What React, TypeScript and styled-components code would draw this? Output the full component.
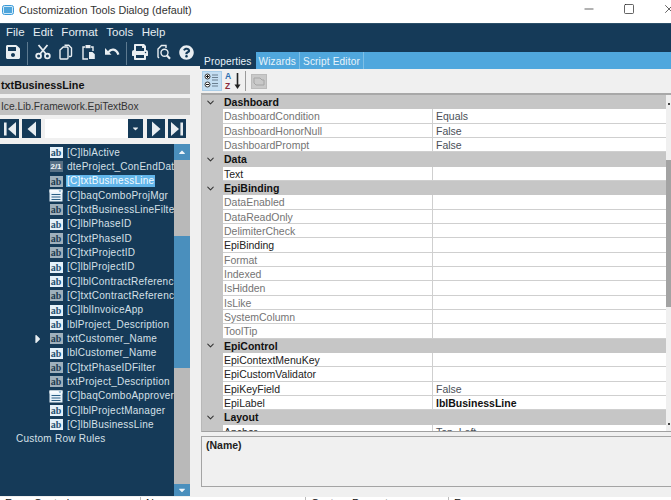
import React from "react";
import styled, { createGlobalStyle } from "styled-components";
import { FaSave, FaQuestionCircle, FaPrint, FaCaretRight, FaCaretUp, FaCaretDown } from "react-icons/fa";
import { ChevronDown, Minus, Square, X } from "lucide-react";

const NAVY = "#153a58";
const BLUE = "#50a7dd";
const SCROLLBLUE = "#4a8fbd";
const GREY = "#c6c6c6";
const PANEL = "#f0f0f0";

const Global = createGlobalStyle`
  html, body { margin: 0; padding: 0; background: ${PANEL}; }
  body { font-family: "Noto Sans", "Liberation Sans", sans-serif; }
  * { box-sizing: border-box; }
`;

const Window = styled.div`
  width: 671px;
  height: 500px;
  overflow: hidden;
  display: flex;
  flex-direction: column;
  background: ${PANEL};
`;

const TitleBar = styled.div`
  height: 23px;
  flex: none;
  background: #fff;
  display: flex;
  align-items: center;
  padding: 0 0 3px 2px;
  color: #333;
  font-family: "Liberation Sans", sans-serif;
  font-size: 10.8px;
`;
const TitleText = styled.span`
  margin-left: 5px;
`;
const WinControls = styled.div`
  margin-left: auto;
  margin-right: -5px;
  margin-bottom: 2px;
  display: flex;
  align-items: center;
  gap: 27px;
  color: #222;
  svg { display: block; flex: none; }
`;

const MenuBar = styled.div`
  height: 17px;
  flex: none;
  background: ${NAVY};
  display: flex;
  align-items: center;
  gap: 8.5px;
  padding-left: 6px;
  color: #e6edf2;
  font-family: "Liberation Sans", sans-serif;
  font-size: 11.5px;
  border-top: 1px solid #2c5069;
`;

const Main = styled.div`
  flex: 1;
  min-height: 0;
  display: flex;
`;
const LeftCol = styled.div`
  width: 200px;
  flex: none;
  display: flex;
  flex-direction: column;
`;
const RightCol = styled.div`
  flex: 1;
  min-width: 0;
  display: flex;
  flex-direction: column;
`;

const Toolbar = styled.div`
  height: 26px;
  flex: none;
  background: ${NAVY};
  display: flex;
  align-items: flex-start;
  padding: 3px 0 0 1.5px;
  color: #e9eef2;
`;
const ToolSlot = styled.div`
  width: 23px;
  height: 18px;
  display: flex;
  align-items: center;
  justify-content: center;
  flex: none;
`;
const ToolSep = styled.div<{ $after: number }>`
  width: 1px;
  height: 23px;
  margin: -1px ${(p) => p.$after}px 0 2.5px;
  background: #5d7a90;
  flex: none;
`;

const LeftBody = styled.div`
  flex: 1;
  min-height: 0;
  display: flex;
  flex-direction: column;
  padding: 9px 10.5px 0 0;
`;
const NameBox = styled.div<{ $bold?: boolean }>`
  height: ${(p) => (p.$bold ? 19 : 17)}px;
  margin-bottom: 4px;
  flex: none;
  background: #c1c1c1;
  display: flex;
  align-items: center;
  padding-left: 1px;
  color: ${(p) => (p.$bold ? "#111" : "#333")};
  font-family: "Liberation Sans", sans-serif;
  font-size: ${(p) => (p.$bold ? 10.8 : 10.2)}px;
  font-weight: ${(p) => (p.$bold ? 700 : 400)};
  white-space: nowrap;
  overflow: hidden;
`;
const NavRow = styled.div`
  height: 19px;
  flex: none;
  display: flex;
  gap: 3px;
  color: #e8edf1;
`;
const NavBtn = styled.div<{ $w?: number }>`
  width: ${(p) => p.$w ?? 19}px;
  flex: none;
  background: ${NAVY};
  display: flex;
  align-items: center;
  justify-content: center;
`;
const NavField = styled.div`
  width: 83px;
  margin-left: 1px;
  flex: none;
  background: #fff;
`;
const NavDrop = styled(NavBtn)`
  margin: 0 1px 0 -3px;
`;

const TreePanel = styled.div`
  height: 352px;
  margin-top: 6px;
  flex: none;
  display: flex;
  background: ${NAVY};
`;
const TreeList = styled.div`
  flex: 1;
  min-width: 0;
  overflow: hidden;
  padding-top: 1.5px;
  color: #d5e0e8;
  font-family: "Liberation Sans", sans-serif;
  font-size: 10px;
  letter-spacing: 0.25px;
`;
const TreeRow = styled.div`
  height: 14.33px;
  display: flex;
  align-items: center;
  white-space: nowrap;
`;
const Marker = styled.div`
  width: 49px;
  flex: none;
  display: flex;
  justify-content: flex-end;
  padding-right: 4px;
  color: #e8eef2;
  svg { display: block; }
`;
const IconBox = styled.div`
  width: 14px;
  flex: none;
  margin-right: 3px;
  display: flex;
  justify-content: center;
`;
const TreeLabel = styled.span<{ $sel?: boolean }>`
  padding: 0 1px;
  line-height: 12px;
  background: ${(p) => (p.$sel ? "#62b5ea" : "transparent")};
  color: ${(p) => (p.$sel ? "#f4fbff" : "inherit")};
`;
const RootLabel = styled.div`
  height: 14.33px;
  margin-top: -1px;
  padding-left: 16px;
  display: flex;
  align-items: center;
`;
const Glyph = styled.span<{ $kind: "label" | "text" | "date" }>`
  display: block;
  width: 13px;
  height: 11px;
  line-height: 11px;
  text-align: center;
  font-family: ${(p) => (p.$kind === "date" ? '"Liberation Sans"' : '"Liberation Serif"')}, serif;
  font-size: ${(p) => (p.$kind === "date" ? 8 : 10)}px;
  font-weight: 700;
  letter-spacing: 0;
  background: ${(p) => (p.$kind === "label" ? "#e4f1fa" : p.$kind === "text" ? "#9fb0bc" : "#587186")};
  color: ${(p) => (p.$kind === "label" ? "#24506f" : p.$kind === "text" ? "#1c3a50" : "#f0f4f7")};
`;

const TreeScroll = styled.div`
  width: 15.5px;
  flex: none;
  display: flex;
  flex-direction: column;
  color: #eef5fa;
`;
const ScrollBtn = styled.div<{ $h: number }>`
  height: ${(p) => p.$h}px;
  flex: none;
  background: ${SCROLLBLUE};
  display: flex;
  align-items: center;
  justify-content: center;
`;
const ScrollPart = styled.div<{ $h: number; $c: string }>`
  height: ${(p) => p.$h}px;
  flex: none;
  background: ${(p) => p.$c};
`;

const TopSpacer = styled.div`
  height: 12px;
  flex: none;
  background: ${NAVY};
`;
const TabStrip = styled.div`
  height: 17px;
  flex: none;
  background: ${BLUE};
  display: flex;
  font-family: "Liberation Sans", sans-serif;
  font-size: 10.1px;
  letter-spacing: 0.15px;
  color: #e8f4fb;
`;
const NavyGap = styled.div`
  width: 1px;
  flex: none;
  background: ${NAVY};
`;
const Tab = styled.div<{ $active?: boolean }>`
  display: flex;
  align-items: center;
  padding: 1px 3px 0 3px;
  background: ${(p) => (p.$active ? NAVY : "transparent")};
  border-right: 1px solid ${(p) => (p.$active ? NAVY : "#7fbfe6")};
`;
const PropTools = styled.div`
  height: 24px;
  flex: none;
  display: flex;
  align-items: center;
  padding-left: 2px;
`;
const ActiveTool = styled.div`
  width: 20px;
  height: 20px;
  flex: none;
  background: #c4def2;
  border: 1px solid #a9cde8;
  display: flex;
  align-items: center;
  justify-content: center;
`;
const SortTool = styled.div`
  width: 20px;
  height: 20px;
  flex: none;
  margin-left: 2px;
`;
const PropSep = styled.div`
  width: 1px;
  height: 20px;
  margin: 0 5px 0 1px;
  background: #9a9a9a;
`;

const Grid = styled.div`
  height: 339px;
  flex: none;
  overflow: hidden;
  margin-left: 1px;
  display: flex;
  border-top: 2px solid #a8a8a8;
  border-bottom: 1px solid #a0a0a0;
  border-left: 1px solid #b8b8b8;
`;
const GridBody = styled.div`
  flex: 1;
  min-width: 0;
  background: #fff;
  font-family: "Liberation Sans", sans-serif;
  font-size: 10.5px;
`;
const CatRow = styled.div`
  height: 14.33px;
  display: flex;
  align-items: center;
  background: ${GREY};
  color: #111;
  font-weight: 700;
  svg { display: block; }
`;
const CatChevron = styled.div`
  width: 16px;
  margin-right: 6px;
  flex: none;
  display: flex;
  justify-content: center;
  color: #333;
`;
const PropRow = styled.div`
  height: 14.33px;
  display: flex;
  white-space: nowrap;
`;
const RowMargin = styled.div`
  width: 21px;
  flex: none;
  background: ${GREY};
`;
const NameCell = styled.div<{ $on?: boolean }>`
  width: 210px;
  flex: none;
  padding-left: 1px;
  line-height: 14.5px;
  color: ${(p) => (p.$on ? "#222" : "#747474")};
  border-bottom: 1px solid #cfcfcf;
  border-right: 1px solid #cfcfcf;
`;
const ValueCell = styled.div<{ $strong?: boolean }>`
  flex: 1;
  min-width: 0;
  padding-left: 3px;
  line-height: 14.5px;
  color: ${(p) => (p.$strong ? "#111" : "#4a4f58")};
  font-weight: ${(p) => (p.$strong ? 700 : 400)};
  border-bottom: 1px solid #cfcfcf;
`;
const GridScroll = styled.div`
  width: 5px;
  flex: none;
  display: flex;
  flex-direction: column;
  background: ${PANEL};
`;
const ScrollDot = styled.div<{ $end?: boolean }>`
  width: 2px;
  height: 2px;
  flex: none;
  margin: ${(p) => (p.$end ? "auto 0 6px 2px" : "8px 0 0 2px")};
  background: #444;
`;
const GridThumb = styled.div`
  height: 147px;
  margin-top: 55px;
  flex: none;
  background: #a3a3a3;
`;

const HelpBox = styled.div`
  height: 51px;
  margin: 4px 0 0 1px;
  flex: none;
  border: 1px solid #a4a4a4;
  border-right: none;
  background: ${PANEL};
  padding: 2px 4px;
  font-family: "Liberation Sans", sans-serif;
  font-size: 10.5px;
  font-weight: 700;
  color: #222;
`;

const BottomStrip = styled.div`
  height: 3px;
  flex: none;
  background: #fff;
  display: flex;
  overflow: hidden;
  font-family: "Liberation Sans", sans-serif;
  font-size: 11px;
  line-height: 11px;
  color: #111;
`;
const StripCell = styled.div<{ $w: number; $line?: boolean }>`
  width: ${(p) => p.$w}px;
  flex: none;
  padding: 1px 0 0 5px;
  white-space: nowrap;
  border-left: ${(p) => (p.$line ? "1px solid #bbb" : "none")};
`;

function Combo() {
  return (
    <svg width="14" height="13" viewBox="0 0 14 13">
      <rect x="0.5" y="0.5" width="13" height="12" fill="#e6f1f9" />
      <rect x="0.5" y="0.5" width="13" height="3" fill="#f7fbfe" />
      <path d="M9.5 1.5h3l-1.5 1.6z" fill="#4a8fbd" />
      <path d="M2.5 5.5h9M2.5 8h9M2.5 10.5h9" stroke="#2b5f85" strokeWidth="1.2" />
    </svg>
  );
}

function CategorizedIcon() {
  return (
    <svg width="16" height="16" viewBox="0 0 16 16" fill="none">
      <circle cx="3.5" cy="3.5" r="2.5" fill="#fff" stroke="#333" />
      <circle cx="3.5" cy="11.5" r="2.5" fill="#fff" stroke="#333" />
      <path d="M2 3.5h3M3.5 2v3M2 11.5h3" stroke="#111" />
      <path d="M8 2h6M8 4.5h6M8 7h6M8 10.5h6M8 13h6" stroke="#6a7f90" />
    </svg>
  );
}

function SortIcon() {
  return (
    <svg width="20" height="20" viewBox="0 0 20 20">
      <text x="1" y="7.8" fontFamily="Liberation Sans" fontWeight="700" fontSize="8.5" fill="#2a6fb0">A</text>
      <text x="1" y="17.5" fontFamily="Liberation Sans" fontWeight="700" fontSize="8.5" fill="#8a2a3a">Z</text>
      <path d="M13.5 2v13" stroke="#222" strokeWidth="1.6" />
      <path d="M10.5 13.5h6l-3 4.5z" fill="#222" />
    </svg>
  );
}

function PagesIcon() {
  return (
    <svg width="16" height="15" viewBox="0 0 16 15">
      <rect x="0.5" y="0.5" width="15" height="14" fill="#c9c9c9" stroke="#bbb" />
      <path d="M3 4h6l2 2h2v5H5L3 9z" fill="none" stroke="#a5a5a5" />
    </svg>
  );
}

function CutIcon() {
  return (
    <svg width="16" height="16" viewBox="0 0 16 16" fill="none" stroke="currentColor" strokeWidth="1.8">
      <circle cx="3.6" cy="12" r="2.4" />
      <circle cx="12.4" cy="12" r="2.4" />
      <path d="M5 10 12.5 1M11 10 3.5 1" />
    </svg>
  );
}

function CopyIcon() {
  return (
    <svg width="15" height="16" viewBox="0 0 15 16" fill="none" stroke="currentColor" strokeWidth="1.4">
      <path d="M6.5 1.2h4.2l2.8 2.8v7.5a1 1 0 0 1-1 1H11" />
      <path d="M2 6l3.2-3h3.8a1 1 0 0 1 1 1v10a1 1 0 0 1-1 1H3a1 1 0 0 1-1-1z" />
    </svg>
  );
}

function PasteIcon() {
  return (
    <svg width="15" height="16" viewBox="0 0 15 16" fill="none" stroke="currentColor" strokeWidth="1.4">
      <path d="M4 3H2v12h5" />
      <path d="M10 3h2v4" />
      <rect x="4.5" y="1" width="5" height="3.2" fill="currentColor" stroke="none" />
      <path d="M8 8h3.5l2.3 2.3V15H8z" fill="currentColor" stroke="none" />
    </svg>
  );
}

function UndoIcon() {
  return (
    <svg width="16" height="14" viewBox="0 0 16 14" fill="none">
      <path d="M4.5 7.2C7 3.6 12 3.4 14.4 9.6" stroke="currentColor" strokeWidth="2.3" />
      <path d="M1 3v6.8h6.5z" fill="currentColor" />
    </svg>
  );
}

function FindIcon() {
  return (
    <svg width="15" height="16" viewBox="0 0 15 16" fill="none" stroke="currentColor" strokeWidth="1.4">
      <path d="M3 14 2 13V5l3.5-3.5H10V4" />
      <circle cx="8.5" cy="8.8" r="3.5" />
      <path d="M11 11.5l3 3.3" strokeWidth="2.2" />
    </svg>
  );
}

function NavIcon({ dir, end }: { dir: "left" | "right"; end?: boolean }) {
  const flip = dir === "right" ? "matrix(-1 0 0 1 16 0)" : undefined;
  return (
    <svg width="16" height="16" viewBox="0 0 16 16" fill="currentColor">
      <g transform={flip}>
        {end ? (
          <>
            <rect x="2" y="1.5" width="2.6" height="13" />
            <path d="M14 1v14L6 8z" />
          </>
        ) : (
          <path d="M12 0.5v15L3.5 8z" />
        )}
      </g>
    </svg>
  );
}

type Kind = "label" | "text" | "date" | "combo";
const items: [Kind, string][] = [
  ["label", "[C]lblActive"],
  ["date", "dteProject_ConEndDate"],
  ["text", "[C]txtBusinessLine"],
  ["combo", "[C]baqComboProjMgr"],
  ["text", "[C]txtBusinessLineFilter"],
  ["label", "[C]lblPhaseID"],
  ["text", "[C]txtPhaseID"],
  ["text", "[C]txtProjectID"],
  ["label", "[C]lblProjectID"],
  ["label", "[C]lblContractReference"],
  ["text", "[C]txtContractReference"],
  ["label", "[C]lblInvoiceApp"],
  ["label", "lblProject_Description"],
  ["text", "txtCustomer_Name"],
  ["label", "lblCustomer_Name"],
  ["text", "[C]txtPhaseIDFilter"],
  ["text", "txtProject_Description"],
  ["combo", "[C]baqComboApprover"],
  ["label", "[C]lblProjectManager"],
  ["label", "[C]lblBusinessLine"],
];

type GridItem =
  | { cat: string }
  | { name: string; value?: string; on?: boolean; strong?: boolean };
const gridItems: GridItem[] = [
  { cat: "Dashboard" },
  { name: "DashboardCondition", value: "Equals" },
  { name: "DashboardHonorNull", value: "False" },
  { name: "DashboardPrompt", value: "False" },
  { cat: "Data" },
  { name: "Text", on: true },
  { cat: "EpiBinding" },
  { name: "DataEnabled" },
  { name: "DataReadOnly" },
  { name: "DelimiterCheck" },
  { name: "EpiBinding", on: true },
  { name: "Format" },
  { name: "Indexed" },
  { name: "IsHidden" },
  { name: "IsLike" },
  { name: "SystemColumn" },
  { name: "ToolTip" },
  { cat: "EpiControl" },
  { name: "EpiContextMenuKey", on: true },
  { name: "EpiCustomValidator", on: true },
  { name: "EpiKeyField", on: true, value: "False" },
  { name: "EpiLabel", on: true, value: "lblBusinessLine", strong: true },
  { cat: "Layout" },
  { name: "Anchor", on: true, value: "Top, Left" },
];

export default function App() {
  return (
    <Window>
      <Global />
      <TitleBar>
        <svg width="12" height="10" viewBox="0 0 12 10">
          <rect x="0.5" y="0.5" width="11" height="9" rx="2" fill="#cfe8f8" stroke="#3b9bd8" />
          <rect x="2" y="2" width="8" height="6" fill="#4fa6dc" />
        </svg>
        <TitleText>Customization Tools Dialog (default)</TitleText>
        <WinControls>
          <Minus size={14} strokeWidth={1.2} />
          <Square size={12} strokeWidth={1.4} />
          <X size={14} strokeWidth={1.2} />
        </WinControls>
      </TitleBar>
      <MenuBar>
        <span>File</span>
        <span>Edit</span>
        <span>Format</span>
        <span>Tools</span>
        <span>Help</span>
      </MenuBar>
      <Main>
        <LeftCol>
          <Toolbar>
            <ToolSlot><FaSave size={16} /></ToolSlot>
            <ToolSep $after={3} />
            <ToolSlot><CutIcon /></ToolSlot>
            <ToolSlot><CopyIcon /></ToolSlot>
            <ToolSlot><PasteIcon /></ToolSlot>
            <ToolSlot><UndoIcon /></ToolSlot>
            <ToolSep $after={2} />
            <ToolSlot><FaPrint size={16} /></ToolSlot>
            <ToolSlot><FindIcon /></ToolSlot>
            <ToolSlot><FaQuestionCircle size={15} /></ToolSlot>
          </Toolbar>
          <LeftBody>
            <NameBox $bold>txtBusinessLine</NameBox>
            <NameBox>Ice.Lib.Framework.EpiTextBox</NameBox>
            <NavRow>
              <NavBtn><NavIcon dir="left" end /></NavBtn>
              <NavBtn><NavIcon dir="left" /></NavBtn>
              <NavField />
              <NavDrop $w={15}><FaCaretDown size={9} /></NavDrop>
              <NavBtn $w={18}><NavIcon dir="right" /></NavBtn>
              <NavBtn $w={18}><NavIcon dir="right" end /></NavBtn>
            </NavRow>
            <TreePanel>
              <TreeList>
                {items.map(([kind, label], i) => (
                  <TreeRow key={label}>
                    <Marker>{i === 13 && <FaCaretRight size={14} />}</Marker>
                    <IconBox>
                      {kind === "combo" ? (
                        <Combo />
                      ) : (
                        <Glyph $kind={kind}>{kind === "date" ? "2/1" : "ab"}</Glyph>
                      )}
                    </IconBox>
                    <TreeLabel $sel={i === 2}>{label}</TreeLabel>
                  </TreeRow>
                ))}
                <RootLabel>Custom Row Rules</RootLabel>
              </TreeList>
              <TreeScroll>
                <ScrollBtn $h={16}><FaCaretUp size={10} /></ScrollBtn>
                <ScrollPart $h={76} $c="#b9b9b9" />
                <ScrollPart $h={132} $c={SCROLLBLUE} />
                <ScrollPart $h={116} $c="#b9b9b9" />
                <ScrollBtn $h={12}><FaCaretDown size={10} /></ScrollBtn>
              </TreeScroll>
            </TreePanel>
          </LeftBody>
        </LeftCol>
        <RightCol>
          <TopSpacer />
          <TabStrip>
            <NavyGap />
            <Tab $active>Properties</Tab>
            <Tab>Wizards</Tab>
            <Tab>Script Editor</Tab>
          </TabStrip>
          <PropTools>
            <ActiveTool><CategorizedIcon /></ActiveTool>
            <SortTool><SortIcon /></SortTool>
            <PropSep />
            <PagesIcon />
          </PropTools>
          <Grid>
            <GridBody>
              {gridItems.map((g) =>
                "cat" in g ? (
                  <CatRow key={g.cat}>
                    <CatChevron><ChevronDown size={11} strokeWidth={2.2} /></CatChevron>
                    {g.cat}
                  </CatRow>
                ) : (
                  <PropRow key={g.name + (g.on ? "1" : "0")}>
                    <RowMargin />
                    <NameCell $on={g.on}>{g.name}</NameCell>
                    <ValueCell $strong={g.strong}>{g.value}</ValueCell>
                  </PropRow>
                )
              )}
            </GridBody>
            <GridScroll>
              <ScrollDot />
              <GridThumb />
              <ScrollDot $end />
            </GridScroll>
          </Grid>
          <HelpBox>(Name)</HelpBox>
        </RightCol>
      </Main>
      <BottomStrip>
        <StripCell $w={140}>Form Control</StripCell>
        <StripCell $w={165} $line>Name</StripCell>
        <StripCell $w={143} $line>Custom Property</StripCell>
        <StripCell $w={223} $line>Form</StripCell>
      </BottomStrip>
    </Window>
  );
}
